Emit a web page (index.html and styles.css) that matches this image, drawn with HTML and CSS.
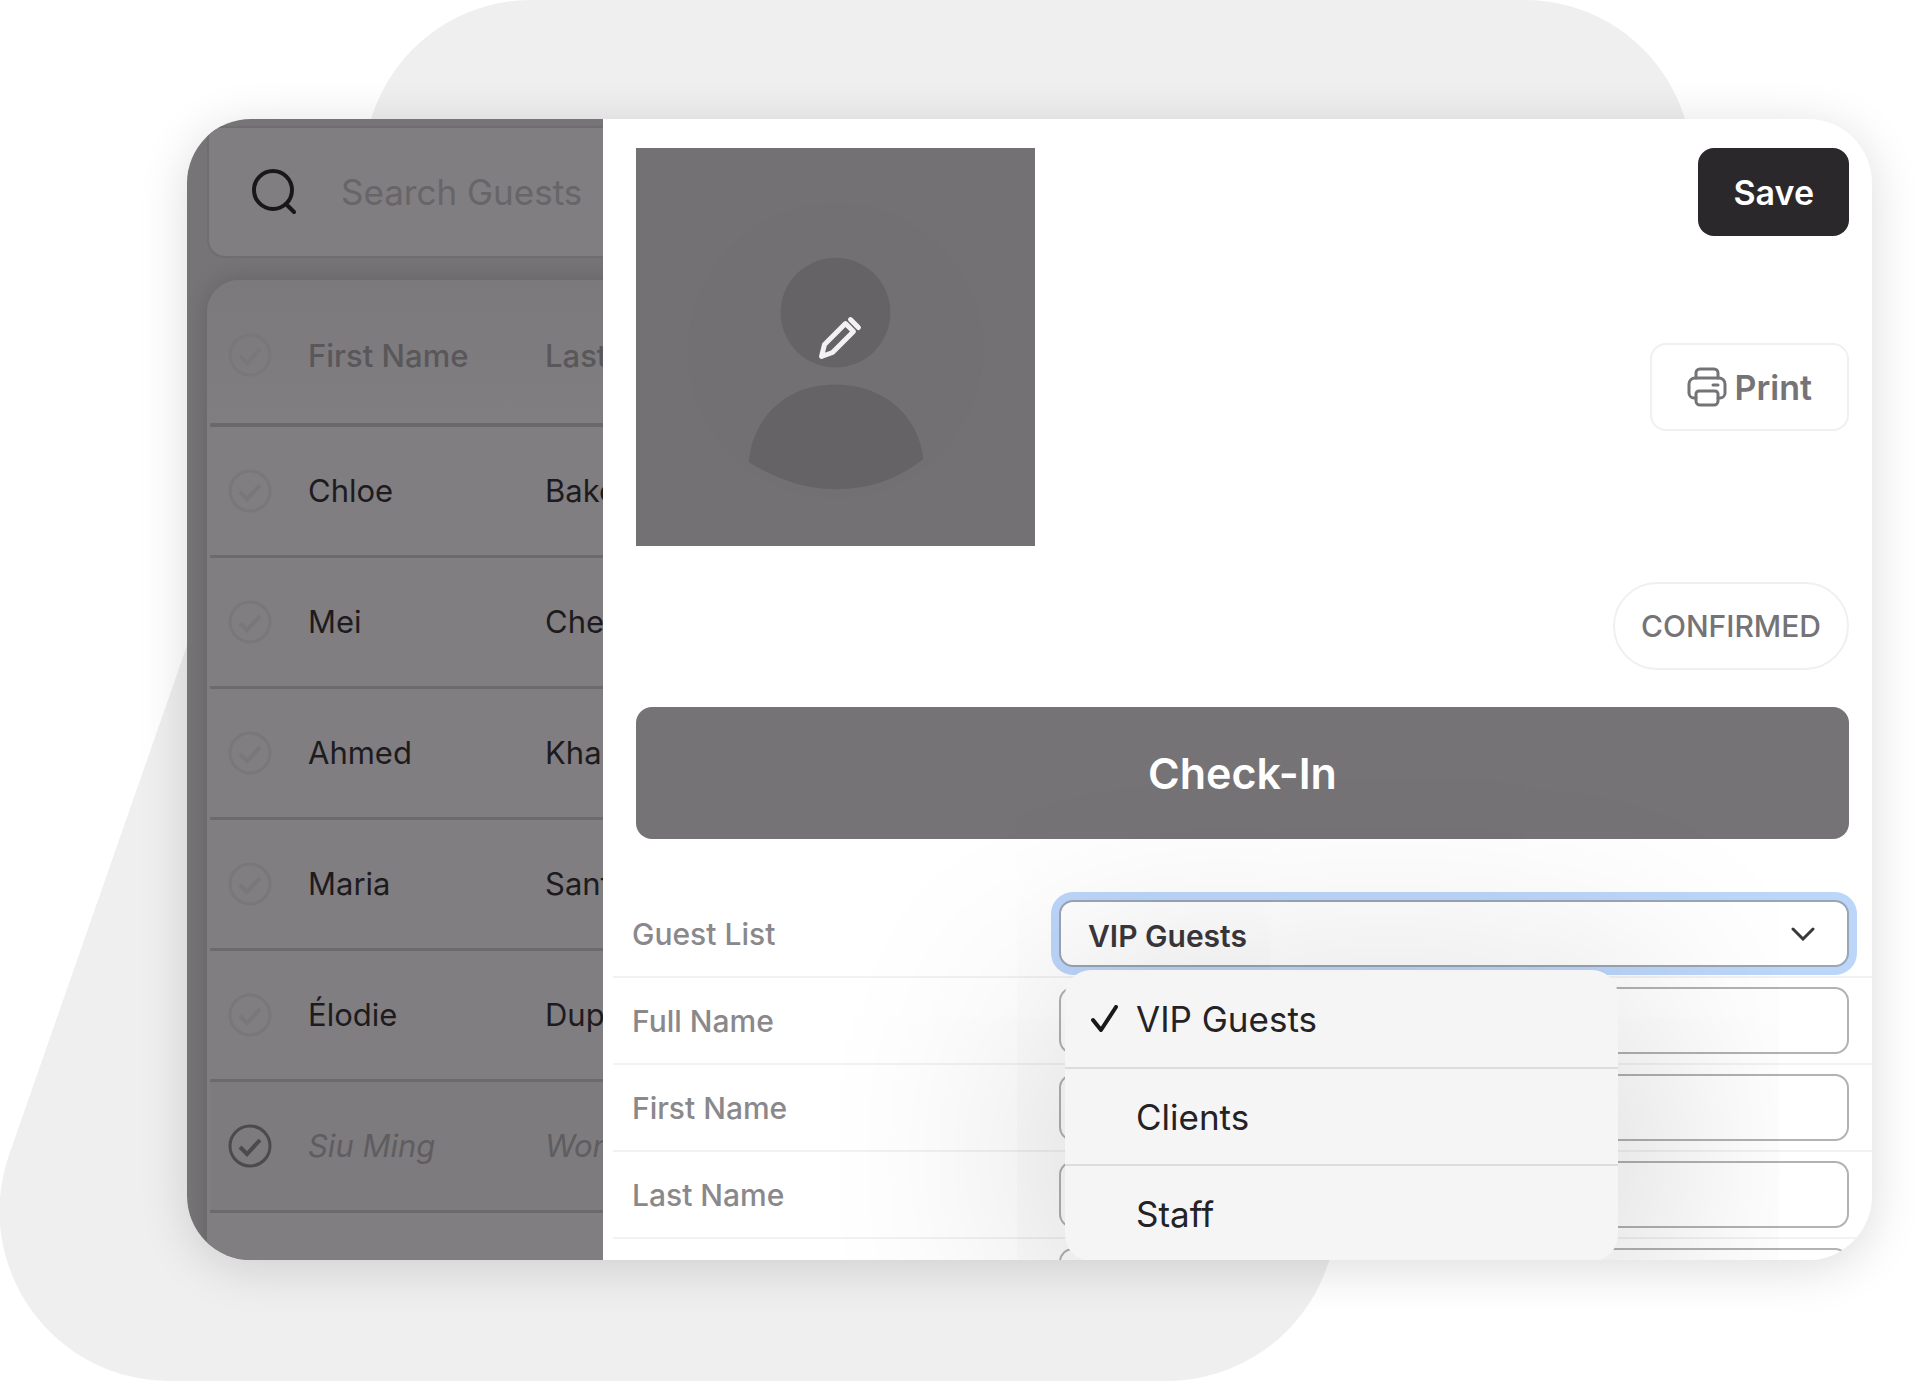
FILE: index.html
```html
<!DOCTYPE html>
<html lang="en">
<head>
  <meta charset="UTF-8">
  <meta name="viewport" content="width=device-width, initial-scale=1.0">
  <title>Guest Details</title>
  <link rel="stylesheet" href="styles.css">
</head>
<body>

  <!-- shared icons -->
  <svg class="sprite" aria-hidden="true">
    <symbol id="icon-check" viewBox="0 0 44 44">
      <circle cx="22" cy="22" r="20" fill="none" stroke="currentColor" stroke-width="3"/>
      <path d="M12 23l7 7 13-14" fill="none" stroke="currentColor" stroke-width="4"/>
    </symbol>
  </svg>

  <div class="stage">
      <svg class="backdrop" viewBox="0 0 1920 1381" preserveAspectRatio="none" aria-hidden="true">
          <path d="M530 0H1525A167 167 0 0 1 1683 221L1327 1267A170 170 0 0 1 1165 1381H170A170 170 0 0 1 9 1155L372 116A167 167 0 0 1 530 0Z"/>
      </svg>

      <main class="card">
          <section class="guests">
              <div class="search-box">
                  <svg class="search-icon" viewBox="0 0 44 46" aria-hidden="true">
                      <circle cx="21" cy="21" r="19"/>
                      <path d="M34 35l8 8"/>
                  </svg>
                  <input type="text" class="search-input" placeholder="Search Guests" aria-label="Search Guests">
              </div>

              <div class="guest-card">
                  <table class="guest-table">
                      <thead>
                          <tr>
                              <th class="check-col"><button class="check" aria-label="Check in all"><svg><use href="#icon-check"/></svg></button></th>
                              <th class="name-col">First Name</th>
                              <th>Last Name</th>
                          </tr>
                      </thead>
                      <tbody>
                          <tr>
                              <td><button class="check" aria-label="Check in Chloe"><svg><use href="#icon-check"/></svg></button></td>
                              <td>Chloe</td>
                              <td>Baker</td>
                          </tr>
                          <tr>
                              <td><button class="check" aria-label="Check in Mei"><svg><use href="#icon-check"/></svg></button></td>
                              <td>Mei</td>
                              <td>Chen</td>
                          </tr>
                          <tr>
                              <td><button class="check" aria-label="Check in Ahmed"><svg><use href="#icon-check"/></svg></button></td>
                              <td>Ahmed</td>
                              <td>Khan</td>
                          </tr>
                          <tr>
                              <td><button class="check" aria-label="Check in Maria"><svg><use href="#icon-check"/></svg></button></td>
                              <td>Maria</td>
                              <td>Santos</td>
                          </tr>
                          <tr>
                              <td><button class="check" aria-label="Check in Élodie"><svg><use href="#icon-check"/></svg></button></td>
                              <td>Élodie</td>
                              <td>Dupont</td>
                          </tr>
                          <tr class="checked-in">
                              <td><button class="check" aria-label="Undo check in"><svg><use href="#icon-check"/></svg></button></td>
                              <td>Siu Ming</td>
                              <td>Wong</td>
                          </tr>
                      </tbody>
                  </table>
              </div>
          </section>

          <section class="details">
              <div class="details-top">
                  <button class="photo" aria-label="Edit photo">
                      <svg viewBox="0 0 400 400" aria-hidden="true">
                          <circle class="photo-ring" cx="200" cy="203" r="148"/>
                          <circle class="photo-person" cx="200" cy="165" r="55"/>
                          <path class="photo-person" d="M113 315C117 270 150 237 200 237S284 270 288 312C262 332 234 342 200 342S138 330 113 315Z"/>
                          <path class="photo-pen" d="M186 209l3-12 21-21 8 8-21 21zM215 172l8 8"/>
                      </svg>
                  </button>

                  <div class="actions">
                      <button class="btn btn-save">Save</button>
                      <button class="btn btn-print">
                          <svg viewBox="0 0 40 40" aria-hidden="true">
                              <path d="M9 11V6a4 4 0 0 1 4-4h14a4 4 0 0 1 4 4v5"/>
                              <path d="M9 31H7a5 5 0 0 1-5-5v-9a6 6 0 0 1 6-6h24a6 6 0 0 1 6 6v9a5 5 0 0 1-5 5h-2"/>
                              <path d="M12 24h16a3 3 0 0 1 3 3v7a4 4 0 0 1-4 4H13a4 4 0 0 1-4-4v-7a3 3 0 0 1 3-3z"/>
                              <path d="M26 18h5"/>
                          </svg>
                          Print
                      </button>
                      <button class="btn btn-status">CONFIRMED</button>
                  </div>
              </div>

              <button class="check-in">Check-In</button>

              <form class="fields">
                  <div class="field">
                      <label for="guest-list">Guest List</label>
                      <div class="select-wrapper">
                          <select id="guest-list">
                              <option selected>VIP Guests</option>
                              <option>Clients</option>
                              <option>Staff</option>
                          </select>
                          <svg class="chevron" viewBox="0 0 24 14" aria-hidden="true"><path d="M2 2l10 10L22 2"/></svg>

                          <ul class="menu" role="listbox" aria-label="Guest List">
                              <li role="option" aria-selected="true">
                                  <svg viewBox="0 0 28 28" aria-hidden="true"><path d="M2 15l8 10L25 2"/></svg>
                                  VIP Guests
                              </li>
                              <li role="option">Clients</li>
                              <li role="option">Staff</li>
                          </ul>
                      </div>
                  </div>
                  <div class="field">
                      <label for="full-name">Full Name</label>
                      <input type="text" id="full-name">
                  </div>
                  <div class="field">
                      <label for="first-name">First Name</label>
                      <input type="text" id="first-name">
                  </div>
                  <div class="field">
                      <label for="last-name">Last Name</label>
                      <input type="text" id="last-name">
                  </div>
                  <div class="field">
                      <input type="text" class="last-input" aria-label="Email">
                  </div>
              </form>
          </section>
      </main>
  </div>

</body>
</html>
```
FILE: styles.css
```css
* {
  margin: 0;
  padding: 0;
  box-sizing: border-box;
}

body {
  font-family: Inter, Roboto, sans-serif;
  background-color: #fff;
}

button,
input,
select {
  font-family: inherit;
}

button {
  border: none;
  background: none;
  cursor: pointer;
}

.sprite {
  display: none;
}

.stage {
  position: relative;
  display: flex;
  height: 100vh;
  padding: 119px 48px 121px 187px;
  overflow: hidden;
}

.backdrop {
  position: absolute;
  top: 0;
  left: 0;
  width: 100%;
  height: 100%;
  fill: #efefef;
}

.card {
  position: relative;
  flex: 1;
  display: grid;
  grid-template-columns: 416px 1fr;
  background-color: #fff;
  border-radius: 64px;
  box-shadow: 0 8px 50px rgba(0, 0, 0, 0.14);
  overflow: hidden;
}

/* dimmed guest list */
.guests {
  background-color: #767477;
  padding: 7px 0 0 20px;
  overflow: hidden;
}

.search-box {
  display: flex;
  align-items: center;
  height: 132px;
  padding-left: 43px;
  background-color: #807e81;
  border: 2px solid #6f6d70;
  border-right: none;
  border-radius: 0 0 0 18px;
}

.search-icon {
  width: 44px;
  height: 46px;
  flex: none;
  fill: none;
  stroke: #19171a;
  stroke-width: 4;
  stroke-linecap: round;
}

.search-input {
  width: 260px;
  margin-left: 45px;
  border: none;
  outline: none;
  background: none;
  font-size: 35px;
}

.search-input::placeholder {
  color: #676568;
}

.guest-card {
  width: 900px;
  height: 1200px;
  margin-top: 22px;
  padding-left: 3px;
  background: linear-gradient(#7b797c, #807e81 150px);
  border-radius: 32px 0 0 0;
  box-shadow: 0 0 24px rgba(0, 0, 0, 0.16);
}

.guest-table {
  width: 100%;
  table-layout: fixed;
  border-collapse: collapse;
  font-size: 31px;
  color: #1d1b1e;
}

.check-col {
  width: 98px;
}

.name-col {
  width: 237px;
}

.guest-table th {
  height: 145px;
  padding-top: 7px;
  text-align: left;
  font-weight: 500;
  color: #59575a;
  border-bottom: 4px solid #6a686b;
}

.guest-table td {
  height: 131px;
  border-bottom: 3px solid #6c6a6d;
}

.check {
  display: block;
  width: 44px;
  height: 44px;
  margin-left: 18px;
  color: #79777a;
}

.check svg {
  display: block;
  width: 44px;
  height: 44px;
}

.guest-table .checked-in td {
  background-color: #7d7b7e;
  color: #5f5d60;
  font-style: italic;
}

.checked-in .check {
  color: #4c4a4d;
}

/* guest details */
.details {
  padding-top: 29px;
  overflow: hidden;
}

.details-top {
  display: flex;
  justify-content: space-between;
  padding: 0 23px 0 33px;
}

.photo {
  align-self: flex-start;
  width: 399px;
  height: 398px;
  background-color: #737174;
}

.photo svg {
  display: block;
  width: 100%;
}

.photo-ring {
  fill: #727073;
}

.photo-person {
  fill: #656366;
}

.photo-pen {
  fill: none;
  stroke: #f3f1f4;
  stroke-width: 5;
  stroke-linecap: round;
  stroke-linejoin: round;
}

.actions {
  display: flex;
  flex-direction: column;
  align-items: flex-end;
}

.btn {
  display: flex;
  align-items: center;
  justify-content: center;
  height: 88px;
  padding: 0 35px;
  border-radius: 16px;
  font-size: 34px;
  font-weight: 600;
}

.btn-save {
  background-color: #2a282b;
  color: #fff;
}

.btn-print {
  gap: 8px;
  margin-top: 107px;
  border: 2px solid #f1eff1;
  color: #757376;
}

.btn-print svg {
  width: 40px;
  height: 40px;
  fill: none;
  stroke: #757376;
  stroke-width: 3;
  stroke-linecap: round;
}

.btn-status {
  margin-top: 151px;
  padding: 0 26px;
  border: 2px solid #f1eff1;
  border-radius: 44px;
  color: #757376;
  font-size: 30px;
  font-weight: 500;
}

.check-in {
  display: block;
  width: calc(100% - 56px);
  height: 132px;
  margin: 37px 23px 52px 33px;
  background-color: #757376;
  border-radius: 16px;
  color: #fff;
  font-size: 43px;
  font-weight: 600;
}

.fields {
  margin-left: 10px;
}

.field {
  display: flex;
  align-items: center;
  height: 87px;
  padding: 0 23px 0 19px;
  border-bottom: 2px solid #f3f2f3;
}

.field label {
  width: 427px;
  font-size: 30px;
  font-weight: 500;
  color: #8a888b;
}

.field input,
.field select {
  width: 100%;
  height: 67px;
  padding: 0 27px;
  background-color: #fff;
  border: 2px solid #b3b1b4;
  border-radius: 14px;
  font-size: 30px;
  font-weight: 500;
  color: #3a383b;
  appearance: none;
}

.field > input {
  flex: 1;
}

.field .last-input {
  margin-left: 427px;
}

.select-wrapper {
  position: relative;
  flex: 1;
}

.field select {
  display: block;
  padding-top: 4px;
  border-color: #9aa6b5;
  box-shadow: 0 0 0 8px #bcd6fa;
  font-weight: 600;
}

.chevron {
  position: absolute;
  top: 27px;
  right: 34px;
  width: 24px;
  height: 14px;
  fill: none;
  stroke: #3a383b;
  stroke-width: 3;
  stroke-linecap: round;
}

.menu {
  position: absolute;
  top: calc(100% + 3px);
  left: 6px;
  z-index: 1;
  width: 70%;
  list-style: none;
  background-color: #f5f5f5;
  border-radius: 26px;
  box-shadow: 0 40px 220px 20px rgba(0, 0, 0, 0.19);
}

.menu li {
  display: flex;
  align-items: center;
  height: 97px;
  padding-left: 71px;
  font-size: 35px;
  color: #242225;
}

.menu li + li {
  border-top: 2px solid #dcdcdd;
}

.menu li[aria-selected="true"] {
  padding-left: 26px;
}

.menu svg {
  width: 28px;
  height: 28px;
  margin-right: 17px;
  fill: none;
  stroke: #19171a;
  stroke-width: 4;
  stroke-linecap: round;
  stroke-linejoin: round;
}
```
